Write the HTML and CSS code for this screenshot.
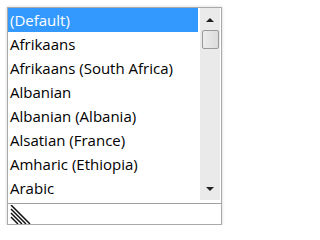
FILE: index.html
```html
<!DOCTYPE html>
<html>
<head>
<meta charset="utf-8">
<link rel="stylesheet" href="styles.css">
</head>
<body>
<div class="box">
  <div class="listarea">
    <ul class="items">
      <li class="item selected">(Default)</li>
      <li class="item">Afrikaans</li>
      <li class="item">Afrikaans (South Africa)</li>
      <li class="item">Albanian</li>
      <li class="item">Albanian (Albania)</li>
      <li class="item">Alsatian (France)</li>
      <li class="item">Amharic (Ethiopia)</li>
      <li class="item">Arabic</li>
    </ul>
    <div class="scrollbar">
      <div class="arrow up"></div>
      <div class="thumb"></div>
      <div class="track"></div>
      <div class="arrow down"></div>
    </div>
  </div>
  <div class="footer">
    <svg class="grip" width="22" height="19" viewBox="0 0 22 19">
      <g stroke="#111" stroke-width="1.5">
        <line x1="1" y1="0" x2="20" y2="19"/>
        <line x1="1" y1="4" x2="16" y2="19"/>
        <line x1="1" y1="8" x2="12" y2="19"/>
        <line x1="1" y1="12" x2="8" y2="19"/>
      </g>
    </svg>
  </div>
</div>
</body>
</html>
```
FILE: styles.css
```css
html, body {
  margin: 0;
  padding: 0;
  background: #fff;
}
body {
  padding: 7px 0 0 7px;
  font-family: "Open Sans", "Noto Sans", sans-serif;
}
.box {
  width: 215px;
  height: 218px;
  box-sizing: border-box;
  border: 1px solid #a9a9a9;
  box-shadow: 0 0 3px rgba(0,0,0,0.18);
  display: flex;
  flex-direction: column;
  background: #fff;
}
.listarea {
  display: flex;
  height: 195px;
  border-bottom: 1px solid #a0a0a0;
}
.items {
  list-style: none;
  margin: 0;
  padding: 0 2px 0 0;
  flex: 1;
}
.item {
  height: 24px;
  line-height: 24px;
  padding-left: 2px;
  font-size: 15px;
  color: #000;
  white-space: nowrap;
}
.item.selected {
  background: #3399ff;
  color: #fff;
}
.scrollbar {
  width: 20px;
  margin-right: 1px;
  height: 192px;
  background: #eaeaea;
  display: flex;
  flex-direction: column;
  align-items: center;
}
.arrow {
  width: 0;
  height: 0;
  border-left: 4px solid transparent;
  border-right: 4px solid transparent;
}
.arrow.up {
  border-bottom: 4px solid #222;
  margin-top: 10px;
  margin-bottom: 8px;
}
.arrow.down {
  border-top: 4px solid #222;
  margin-bottom: 9px;
}
.thumb {
  width: 17px;
  height: 19px;
  box-sizing: border-box;
  border: 1px solid #9a9a9a;
  border-radius: 2px;
  background: linear-gradient(to right, #ececec, #dcdcdc);
}
.track {
  flex: 1;
}
.footer {
  flex: 1;
  display: flex;
  align-items: flex-end;
  padding-left: 2px;
}
.grip {
  display: block;
}
```
